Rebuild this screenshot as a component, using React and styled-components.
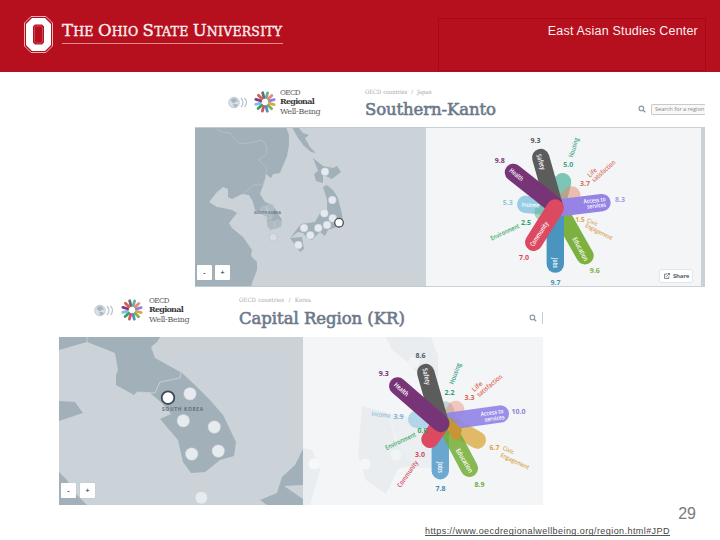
import styled, { createGlobalStyle } from "styled-components"

const GlobalStyle = createGlobalStyle`
    body {
        margin: 0;
        background: white;
    }
    * {
        box-sizing: border-box;
    }
`

const Slide = styled.div`
    width: 720px;
    height: 540px;
    display: flex;
    flex-direction: column;
    overflow: hidden;
    background-color: white;
    font-family: "Liberation Sans", Arial, sans-serif;
`

const Header = styled.header`
    height: 72px;
    flex: none;
    display: flex;
    justify-content: space-between;
    background-color: #b60f1e;
    padding: 0px 14px 0px 24px;
`

const University = styled.div`
    display: flex;
    gap: 9px;
    padding-top: 16px;
`

const UniversityName = styled.div`
    width: 221px;
    height: 28px;
    border-bottom: 1px solid #e58a8f;
    color: #fdeeee;
    font-family: "DejaVu Serif", serif;
    font-size: 12.5px;
    font-weight: 400;
    line-height: 30px;
    letter-spacing: 0.22px;
    -webkit-text-stroke: 0.4px #fdeeee;
    white-space: nowrap;
`

const Cap = styled.span`
    font-size: 16.5px;
`

const Department = styled.div`
    width: 268px;
    height: 53px;
    margin-top: 18px;
    padding: 5px 7px 0px 0px;
    border: 1px solid #a90712;
    color: #fdf1f1;
    font-size: 12.5px;
    line-height: 15px;
    letter-spacing: 0.2px;
    text-align: right;
    white-space: nowrap;
`

const Main = styled.main`
    display: flex;
    flex-direction: column;
    gap: 5px;
    padding-top: 10px;
`

const Panel = styled.section`
    width: ${props => props.$width}px;
    margin-left: ${props => props.$left}px;
`

const PanelHeader = styled.div`
    height: 45px;
    display: flex;
    padding-left: ${props => props.$left}px;
    overflow: hidden;
`

const Brand = styled.div`
    display: flex;
    align-items: center;
    gap: ${props => props.$gap}px;
    width: ${props => props.$width}px;
    height: 28px;
    flex: none;
    margin-top: ${props => props.$top}px;
`

const BrandText = styled.div`
    color: #5c5c5f;
    font-family: "DejaVu Serif", serif;
    font-size: 8px;
    line-height: 9.4px;
    letter-spacing: -0.33px;
    white-space: nowrap;
    strong {
        display: block;
        color: #3a3a3d;
        font-weight: bold;
        letter-spacing: -0.72px;
    }
`

const Org = styled.span`
    display: block;
    font-family: "DejaVu Serif Condensed", "DejaVu Serif", serif;
    font-stretch: condensed;
    letter-spacing: -0.6px;
`

const Heading = styled.div`
    flex: 1;
    white-space: nowrap;
`

const Crumbs = styled.div`
    padding-top: ${props => props.$top}px;
    color: #a3abb2;
    font-family: "DejaVu Serif Condensed", "DejaVu Serif", serif;
    font-stretch: condensed;
    font-size: 6px;
    line-height: 8px;
    letter-spacing: ${props => props.$spacing}px;
    word-spacing: 0.5px;
`

const Title = styled.h1`
    margin: 0;
    padding-top: ${props => props.$top}px;
    color: #6c788a;
    font-family: "DejaVu Serif", serif;
    font-size: 16.5px;
    font-weight: 400;
    line-height: 20px;
    letter-spacing: ${props => props.$spacing}px;
    -webkit-text-stroke: 0.6px #6c788a;
`

const Search = styled.div`
    display: flex;
    align-items: center;
    flex: none;
    gap: 5px;
    height: 12px;
    margin-top: ${props => props.$top}px;
`

const SearchBox = styled.div`
    width: 54px;
    height: 11px;
    padding-left: 3px;
    border: 1px solid #c9cacb;
    border-right: none;
    border-radius: 2px 0px 0px 2px;
    background-color: #f8f8f8;
    color: #8c8c8c;
    font-family: "Open Sans", sans-serif;
    font-size: 5.8px;
    line-height: 9px;
    letter-spacing: -0.1px;
    white-space: nowrap;
`

const Divider = styled.div`
    width: 1px;
    height: 12px;
    background-color: #c8cccf;
`

const PanelBody = styled.div`
    display: flex;
    height: ${props => props.$height}px;
`

const MapBox = styled.div`
    position: relative;
    flex: none;
    width: ${props => props.$width}px;
    background-color: #cbd2d8;
    svg {
        display: block;
    }
`

const Zoom = styled.div`
    position: absolute;
    left: 2px;
    bottom: 7px;
    display: flex;
    gap: ${props => props.$gap}px;
`

const ZoomButton = styled.button`
    width: 15px;
    height: 15px;
    padding: 0;
    border: none;
    border-radius: 1px;
    background-color: white;
    box-shadow: 0 0 1px #aab4bb;
    color: #555b62;
    font-family: "Open Sans", sans-serif;
    font-size: 7px;
    font-weight: bold;
    line-height: 14px;
`

const ChartBox = styled.div`
    position: relative;
    flex: 1;
    background-color: #f3f5f7;
    border: solid #c9d1d7;
    border-width: ${props => (props.$framed ? "1px 4px 1px 0px" : "0px")};
    overflow: hidden;
    svg {
        display: block;
    }
`

const Share = styled.button`
    position: absolute;
    right: 8px;
    bottom: 3px;
    display: flex;
    align-items: center;
    gap: 3px;
    width: 34px;
    height: 14px;
    padding: 0px 4px;
    border: 1px solid #e3e6e9;
    border-radius: 2px;
    background-color: white;
    color: #55606d;
    font-family: "Open Sans", sans-serif;
    font-size: 6px;
    font-weight: bold;
    letter-spacing: -0.2px;
    svg {
        flex: none;
    }
`

const Footer = styled.footer`
    display: flex;
    flex-direction: column;
    align-items: flex-end;
`

const PageNumber = styled.div`
    padding-right: 24px;
    height: 20px;
    color: #7a7a7a;
    font-size: 16px;
    line-height: 18px;
`

const Source = styled.a`
    width: 245px;
    height: 11px;
    margin-right: 50px;
    border-bottom: 1.5px solid #555;
    color: #444;
    font-size: 9px;
    line-height: 13px;
    letter-spacing: 0.43px;
    text-decoration: none;
    white-space: nowrap;
    overflow: hidden;
`

const BlockO = () => (
    <svg width="29" height="37" viewBox="0 0 29 37">
        <path d="M7 .5h15l6.500 6.500v23l-6.500 6.500H7L.5 30V7z" fill="none" stroke="#f3c4c7" strokeWidth=".9" />
        <path fillRule="evenodd" fill="white" d="M8 2h13l6 6v21l-6 6H8l-6-6V8zM11 8.500L9 10.500v16L11 28.500h7l2-2v-16L18 8.500z" />
        <path d="M11.700 10h5.600l1.200 1.200v14.600L17.300 27h-5.600l-1.200-1.200V11.200z" fill="none" stroke="#d5757c" strokeWidth=".6" />
    </svg>
)

const petalColors = ["#686b70", "#63b29b", "#e98a75", "#8f84da", "#dca34d", "#83b34c", "#4c91bc", "#d85164", "#39a06b", "#80bddd", "#7c3c87", "#d9604f"]

const Flower = () => (
    <svg width="24" height="24" viewBox="-12 -12 24 24">
        {petalColors.map((color, i) => (
            <line key={i} x1="0" y1="-4.500" x2="0" y2="-9.500" stroke={color} strokeWidth="2.800" strokeLinecap="round" transform={`rotate(${i * 30 - 14})`} />
        ))}
    </svg>
)

const Globe = () => (
    <svg width="21" height="13" viewBox="0 0 21 13">
        <circle cx="6" cy="6.500" r="5.300" fill="#dce1e7" stroke="#b8c2cd" strokeWidth=".8" />
        <path d="M2.500 4l3-2 3 1 1.500 3-2.500-.5-1 2-2.500-1zM4.500 8.500l4-.5 1.500 1.500-3 1.800z" fill="#a9b5c2" />
        <path d="M13 2q4 4.500 0 9M16.500 2q4 4.500 0 9" fill="none" stroke="#b8c2cd" strokeWidth="1.200" />
    </svg>
)

const Magnifier = () => (
    <svg width="8" height="8" viewBox="0 0 8 8" fill="none" stroke="#8c97a6">
        <circle cx="3.400" cy="3.400" r="2.300" strokeWidth="1.100" />
        <path d="M5.200 5.200L7.200 7.200" strokeWidth="1.300" />
    </svg>
)

const ShareIcon = () => (
    <svg width="6" height="6" viewBox="0 0 6 6" fill="none" stroke="#55606d" strokeWidth=".8">
        <path d="M3 1H.6v4.400h4.200V3.500M2.300 3.600L5.300.6M3.600.5h1.900v1.800" />
    </svg>
)

const OecdBrand = ({ width, top, gap }) => (
    <Brand $width={width} $top={top} $gap={gap}>
        <Globe />
        <Flower />
        <BrandText>
            <Org>OECD</Org>
            <strong>Regional</strong>
            Well-Being
        </BrandText>
    </Brand>
)

const ZoomControls = ({ gap }) => (
    <Zoom $gap={gap}>
        <ZoomButton>-</ZoomButton>
        <ZoomButton>+</ZoomButton>
    </Zoom>
)

const kantoDots = [[325, 171.700], [332.300, 200], [324.300, 213.300], [332.700, 218.300], [327, 225], [318.300, 228], [304, 228], [310.300, 235.300], [298.300, 245]]
const faintDots = [[270, 208], [264.500, 210], [268.300, 215.700], [278, 224], [271, 225]]

const JapanMap = () => (
    <svg width="231" height="160" viewBox="195 127 231 160">
        <g fill="#a1b0b9">
            <path d="M195 127H286L289 135V145L287 156 282 168 280 173 273 174 271 178 266 174 264 183 260 194 265 202 273 205 277 212 282 220 281 227 270 230 267 225V217L255 210 253 202 249 195 242 194 232 199 228 197V189L223 187 217 192 209 202 217 207 223 208 232 210 237 213 229 223 232 228 243 237 252 250 251 256 257 262V270L253 280 251 287H195z" />
            <path d="M292 127H298L303 133 309 135 305 138 310 147 316 153 311 152 304 146 298 138z" />
            <path d="M313 158L323 166 333 168 337 166 341 172 332 179 323 175 323 183 316 181 314 174 318 171z" />
            <path d="M323 187L327 185 333 190 338 198 342 214 343 223 337 227 328 230 325 236 320 232 312 240 307 238 303 233 298 232 290 238 301 224 315 222 320 213 327 212V200z" />
            <path d="M290 238L302 237 304 249 300 252 295 245z" />
        </g>
        <path d="M217 129L222 132 230 133 238 142 245 144 262 140 267 147 266 155 258 160 267 168 265 180 262 185 254 185 243 194" fill="none" stroke="#b7c2ca" strokeWidth=".8" />
        {faintDots.map(([x, y], i) => (
            <circle key={i} cx={x} cy={y} r="4" fill="#cbd5dc" fillOpacity=".3" stroke="#bcc7cf" strokeWidth=".6" />
        ))}
        <text x="254" y="214" textLength="27" fontFamily="Open Sans" fontWeight="bold" fontSize="4" fill="#6f7d88">SOUTH KOREA</text>
        <circle cx="273.300" cy="237.300" r="4" fill="#d7dde2" stroke="#b5bfc7" strokeWidth=".6" />
        {kantoDots.map(([x, y], i) => (
            <circle key={i} cx={x} cy={y} r="4" fill="#e5eaef" stroke="#b2bec7" strokeWidth=".4" />
        ))}
        <circle cx="339" cy="222.700" r="4.300" fill="white" stroke="#45505b" strokeWidth="1.300" />
        <path d="M195 127.500H426M195 286.500H426" stroke="#c0cad1" />
    </svg>
)

const koreaDots = [[190, 393.700], [183.300, 420.700], [214.300, 427], [191.700, 454], [218.300, 451], [201.300, 497.700]]

const KoreaMap = () => (
    <svg width="244" height="168" viewBox="59 337 244 168">
        <g fill="#a1b0b9">
            <path d="M59 337H160L157 342 151 347 155 358 182 373 198 388 209 399 223 415 236 442 234 456 220 460 205 472 191 473 183 462 178 440 160 419 171 414 162 403 150 393 137 392 134 395 116 385V375L118 370 115 353 105 349 87 342 59 350z" />
            <path d="M59 401L75 402 83 413 59 421zM59 472L67 480 71 489 87 505H59z" />
            <path d="M303 449L295 465 282 477 277 493 260 500 267 505H303z" />
        </g>
        <path d="M284 486L303 485V499z" fill="#cbd2d8" />
        <path d="M87 337V342M137 392L155 393 160 382 180 378 181 373" fill="none" stroke="#ced5da" strokeWidth=".8" />
        <text x="162" y="411" textLength="41" fontFamily="Open Sans" fontWeight="bold" fontSize="4.800" fill="#5f6d78">SOUTH KOREA</text>
        {koreaDots.map(([x, y], i) => (
            <circle key={i} cx={x} cy={y} r="6.300" fill="#e7ebee" stroke="#c3ccd2" strokeWidth=".5" />
        ))}
        <circle cx="168" cy="397.700" r="6.300" fill="white" stroke="#3f4d5b" strokeWidth="1.800" />
    </svg>
)

const Petal = ({ from, to, color, opacity = 1 }) => (
    <line x1={from[0]} y1={from[1]} x2={to[0]} y2={to[1]} stroke={color} strokeOpacity={opacity} strokeWidth="17.400" strokeLinecap="round" />
)

// x and y are the middle of the text
const Label = ({ x, y, width, angle = 0, color = "white", size = 6.6, weight = 600, children }) => (
    <text
        transform={`translate(${x} ${y}) rotate(${angle})`}
        dy=".36em"
        textAnchor="middle"
        textLength={width}
        lengthAdjust="spacingAndGlyphs"
        fontFamily="Open Sans"
        fontWeight={weight}
        fontSize={size}
        fill={color}
    >
        {children}
    </text>
)

const Value = ({ x, y, color, children, width = 10 }) => (
    <Label x={x} y={y} color={color} size={7.5} weight={700} width={width}>{children}</Label>
)

const KantoChart = () => (
    <svg width="275" height="158" viewBox="426 128 275 158">
        <Petal from={[525.7, 204.3]} to={[556, 207]} color="#99cde3" />
        <Petal from={[543, 212.5]} to={[556, 208]} color="#5dbb96" opacity={0.55} />
        <Petal from={[562.7, 181.7]} to={[557, 205]} color="#5fb9a3" opacity={0.8} />
        <Petal from={[571.7, 195]} to={[559, 207]} color="#e8836b" opacity={0.5} />
        <Petal from={[585, 255.7]} to={[558.5, 209]} color="#7db13f" />
        <Petal from={[555.3, 264]} to={[555.3, 208]} color="#4a95bf" />
        <Petal from={[602, 202.7]} to={[561, 207.7]} color="#9583e6" />
        <Petal from={[540.7, 157.5]} to={[553.5, 203]} color="#5c5c5d" />
        <Petal from={[513.5, 172.5]} to={[554, 204.5]} color="#773477" />
        <Petal from={[533.7, 242.3]} to={[555.3, 208]} color="#dc4a61" />
        <Label x={541} y={162} width={16} angle={73}>Safety</Label>
        <Label x={516.5} y={174.5} width={16} angle={40}>Health</Label>
        <Label x={530.5} y={204.8} width={18} angle={3} size={5.8}>Income</Label>
        <Label x={539} y={234} width={28} angle={-57}>Community</Label>
        <Label x={555.5} y={263} width={10} angle={90}>Jobs</Label>
        <Label x={580.5} y={249} width={26} angle={62}>Education</Label>
        <Label x={594.5} y={200.3} width={22} angle={-6} size={6}>Access to</Label>
        <Label x={596.5} y={205.5} width={19} angle={-6} size={6}>services</Label>
        <Label x={573.5} y={147.5} width={20} angle={-73} color="#3aa189">Housing</Label>
        <Label x={592} y={172.5} width={10} angle={-43} color="#de735f">Life</Label>
        <Label x={603.5} y={171} width={29} angle={-42} color="#de735f">satisfaction</Label>
        <Label x={504.8} y={232} width={31} angle={-25} color="#35a764">Environment</Label>
        <Label x={592.5} y={222} width={11} angle={22} color="#e0a155" size={6}>Civic</Label>
        <Label x={599} y={231.5} width={30} angle={27} color="#e0a155" size={6}>Engagement</Label>
        <Value x={535.5} y={140.7} color="#55585d">9.3</Value>
        <Value x={499.7} y={160} color="#773477">9.8</Value>
        <Value x={568.3} y={164} color="#43a28a">5.0</Value>
        <Value x={585} y={183} color="#dd6c5b">3.7</Value>
        <Value x={620} y={199.3} color="#a69aea">8.3</Value>
        <Value x={507.7} y={202} color="#8fc6de">5.3</Value>
        <Value x={526} y={222} color="#30a45e">2.5</Value>
        <Value x={580} y={219.3} color="#dda23f" width={9}>1.5</Value>
        <Value x={524} y={257.3} color="#d4495e">7.0</Value>
        <Value x={594.8} y={270} color="#7fb043">9.6</Value>
        <Value x={555.6} y={282} color="#4a92bc">9.7</Value>
    </svg>
)

const CapitalChart = () => (
    <svg width="240" height="168" viewBox="303 337 240 168">
        <path d="M386 337H431L438 356V384L418 374 408 362 392 350zM303 448L312 450 320 470 310 505H303zM362 406L388 413 395 440 418 445V465L398 469 386 494 366 480 358 455z" fill="#e9edf0" />
        <path d="M388 413L448 425V467L415 468 398 445z" fill="#eceff2" />
        <circle cx="414" cy="362" r="5.500" fill="#f1f4f5" />
        <circle cx="396" cy="455" r="5.500" fill="#f1f4f5" />
        <circle cx="365" cy="464" r="5.500" fill="#f4f6f7" />
        <circle cx="314" cy="464" r="5.500" fill="#f6f8f9" />
        <Petal from={[416.7, 419.3]} to={[441, 422]} color="#a8d0e8" opacity={0.85} />
        <Petal from={[445, 410]} to={[448, 420]} color="#7da69d" opacity={0.4} />
        <Petal from={[455.7, 409.5]} to={[448, 421]} color="#e8836b" opacity={0.4} />
        <Petal from={[477.3, 440]} to={[449, 424]} color="#dcab44" opacity={0.8} />
        <Petal from={[500.3, 414]} to={[450, 421]} color="#9084e6" opacity={0.9} />
        <Petal from={[440.3, 470.7]} to={[440.3, 426]} color="#4a95c4" opacity={0.8} />
        <Petal from={[469.3, 468.3]} to={[447, 426]} color="#73ad35" opacity={0.85} />
        <path d="M449 418L462 429 459 441 452 438 447 428z" fill="#c79532" />
        <Petal from={[430, 439.3]} to={[439, 426]} color="#dc4a61" />
        <Petal from={[425.7, 372.5]} to={[439, 419]} color="#5c5c5d" />
        <Petal from={[397.7, 386]} to={[440.8, 423.5]} color="#773477" />
        <Label x={426.5} y={376.5} width={17} angle={78}>Safety</Label>
        <Label x={401.5} y={389.3} width={17} angle={42}>Health</Label>
        <Label x={492} y={412.5} width={23} angle={-8} size={6}>Access to</Label>
        <Label x={494.5} y={418.3} width={20} angle={-8} size={6}>services</Label>
        <Label x={464.5} y={460.5} width={27} angle={59}>Education</Label>
        <Label x={440.3} y={467.5} width={11} angle={90}>Jobs</Label>
        <Label x={455} y={373.5} width={22} angle={-70} color="#36a085">Housing</Label>
        <Label x={477} y={386.5} width={12} angle={-42} color="#de6955">Life</Label>
        <Label x={489.5} y={385.5} width={31} angle={-40} color="#de6955">satisfaction</Label>
        <Label x={381} y={414.5} width={19} angle={7} color="#8cc0de">Income</Label>
        <Label x={400.5} y={441} width={33} angle={-25} color="#35a764">Environment</Label>
        <Label x={407.5} y={474} width={31} angle={-55} color="#d4495e">Community</Label>
        <Label x={508.5} y={450} width={12} angle={24} color="#d7a347" size={6}>Civic</Label>
        <Label x={515} y={461} width={31} angle={25} color="#d7a347" size={6}>Engagement</Label>
        <Value x={420.5} y={354.8} color="#55585d">8.6</Value>
        <Value x={383.8} y={373.7} color="#773477">9.3</Value>
        <Value x={449.5} y={392} color="#249d79">2.2</Value>
        <Value x={469.5} y={397} color="#dd5f4d">3.3</Value>
        <Value x={518.5} y={411.7} color="#8f82db" width={14}>10.0</Value>
        <Value x={398.5} y={416.7} color="#79b4d8">3.9</Value>
        <Value x={422.5} y={430.5} color="#30a45e">0.6</Value>
        <Value x={420} y={454} color="#d4495e">3.0</Value>
        <Value x={494.5} y={447.7} color="#d7a33a">6.7</Value>
        <Value x={479.5} y={484} color="#73a93a">8.9</Value>
        <Value x={440.5} y={488.5} color="#4389b5">7.8</Value>
    </svg>
)

const App = () => {
  return (
    <Slide>
      <GlobalStyle/>
      <Header>
        <University>
            <BlockO/>
            <UniversityName>
                <Cap>T</Cap>HE <Cap>O</Cap>HIO <Cap>S</Cap>TATE <Cap>U</Cap>NIVERSITY
            </UniversityName>
        </University>
        <Department>East Asian Studies Center</Department>
      </Header>
      <Main>
        <Panel $width={510} $left={195}>
            <PanelHeader $left={33}>
                <OecdBrand width={137} top={6} gap={3.5}/>
                <Heading>
                    <Crumbs $top={6} $spacing={-0.18}>OECD countries&nbsp; /&nbsp; Japan</Crumbs>
                    <Title $top={4} $spacing={-0.1}>Southern-Kanto</Title>
                </Heading>
                <Search $top={21}>
                    <Magnifier/>
                    <SearchBox>Search for a region</SearchBox>
                </Search>
            </PanelHeader>
            <PanelBody $height={160}>
                <MapBox $width={231}>
                    <JapanMap/>
                    <ZoomControls gap={3}/>
                </MapBox>
                <ChartBox $framed>
                    <KantoChart/>
                    <Share><ShareIcon/>Share</Share>
                </ChartBox>
            </PanelBody>
        </Panel>
        <Panel $width={484} $left={59}>
            <PanelHeader $left={35}>
                <OecdBrand width={145} top={4} gap={5}/>
                <Heading>
                    <Crumbs $top={4} $spacing={0.02}>OECD countries&nbsp; /&nbsp; Korea</Crumbs>
                    <Title $top={5} $spacing={-0.05}>Capital Region (KR)</Title>
                </Heading>
                <Search $top={20}>
                    <Magnifier/>
                    <Divider/>
                </Search>
            </PanelHeader>
            <PanelBody $height={168}>
                <MapBox $width={244}>
                    <KoreaMap/>
                    <ZoomControls gap={4}/>
                </MapBox>
                <ChartBox>
                    <CapitalChart/>
                </ChartBox>
            </PanelBody>
        </Panel>
      </Main>
      <Footer>
        <PageNumber>29</PageNumber>
        <Source>https://www.oecdregionalwellbeing.org/region.html#JPD</Source>
      </Footer>
    </Slide>
  )
}

export default App
